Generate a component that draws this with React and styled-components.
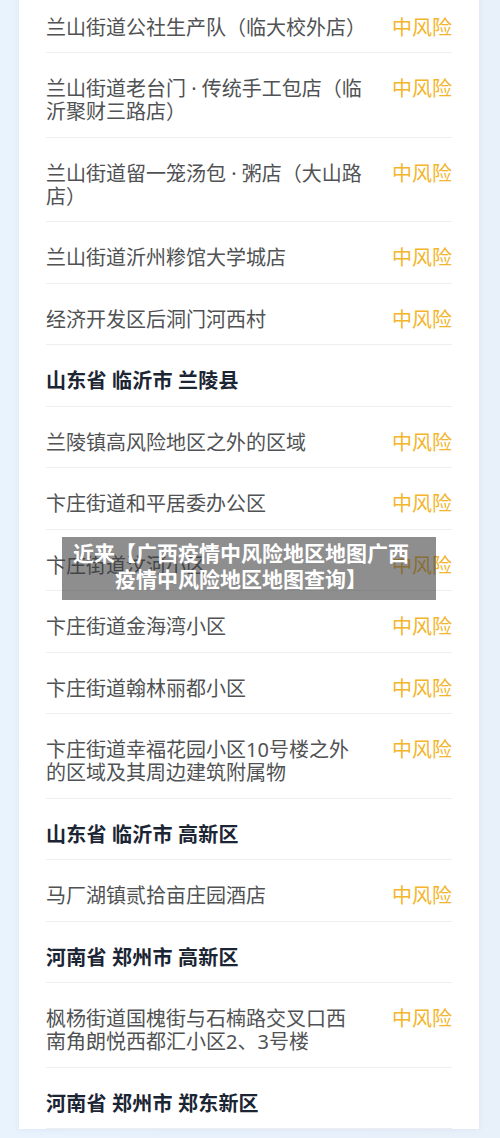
import React from "react";
import styled, { createGlobalStyle } from "styled-components";

const Global = createGlobalStyle`
  html, body {
    margin: 0;
    padding: 0;
    background: #e8f1fb;
  }
  body {
    font-family: "Noto Sans", "Noto Sans CJK SC", sans-serif;
    overflow: hidden;
  }
`;

const Page = styled.div`
  position: relative;
  width: 500px;
  height: 1138px;
  overflow: hidden;
  background: linear-gradient(90deg, #e9f3fd 0%, #e8f0fa 100%);
`;

const Card = styled.div`
  margin: -8.5px 21px 0 19px;
  background: #ffffff;
  padding: 0 27px;
  box-shadow: 0 0 6px rgba(120, 150, 190, 0.12);
`;

const Row = styled.div`
  display: flex;
  align-items: flex-start;
  justify-content: space-between;
  padding: 24px 0 13.5px;
  border-bottom: 1px solid #eceef1;
  font-size: 20px;
  line-height: 23px;
`;

const Name = styled.div`
  color: ${(p) => (p.$header ? "#1b2533" : "#505254")};
  font-weight: ${(p) => (p.$header ? 700 : 400)};
  letter-spacing: ${(p) => (p.$header ? "0.2px" : "0")};
  width: 330px;
`;

const Line = styled.span`
  display: block;
  white-space: nowrap;
`;

const Risk = styled.div`
  color: #f2b52b;
  white-space: nowrap;
`;

const Overlay = styled.div`
  position: absolute;
  top: 537px;
  left: 62px;
  width: 374px;
  height: 63px;
  box-sizing: border-box;
  padding: 3px 16px 0 0;
  background: rgba(60, 60, 60, 0.58);
  color: #ffffff;
  font-weight: 700;
  font-size: 21px;
  line-height: 26px;
  text-align: center;
`;

const rows = [
  { lines: ["兰山街道公社生产队（临大校外店）"], risk: true },
  { lines: ["兰山街道老台门 · 传统手工包店（临", "沂聚财三路店）"], risk: true },
  { lines: ["兰山街道留一笼汤包 · 粥店（大山路", "店）"], risk: true },
  { lines: ["兰山街道沂州糁馆大学城店"], risk: true },
  { lines: ["经济开发区后洞门河西村"], risk: true },
  { lines: ["山东省 临沂市 兰陵县"], header: true },
  { lines: ["兰陵镇高风险地区之外的区域"], risk: true },
  { lines: ["卞庄街道和平居委办公区"], risk: true },
  { lines: ["卞庄街道汶河小区"], risk: true },
  { lines: ["卞庄街道金海湾小区"], risk: true },
  { lines: ["卞庄街道翰林丽都小区"], risk: true },
  { lines: ["卞庄街道幸福花园小区10号楼之外", "的区域及其周边建筑附属物"], risk: true },
  { lines: ["山东省 临沂市 高新区"], header: true },
  { lines: ["马厂湖镇贰拾亩庄园酒店"], risk: true },
  { lines: ["河南省 郑州市 高新区"], header: true },
  { lines: ["枫杨街道国槐街与石楠路交叉口西", "南角朗悦西都汇小区2、3号楼"], risk: true },
  { lines: ["河南省 郑州市 郑东新区"], header: true },
];

export default function App() {
  return (
    <Page>
      <Global />
      <Card>
        {rows.map((r, i) => (
          <Row key={i}>
            <Name $header={r.header}>
              {r.lines.map((l, j) => (
                <Line key={j}>{l}</Line>
              ))}
            </Name>
            {r.risk && <Risk>中风险</Risk>}
          </Row>
        ))}
      </Card>
      <Overlay>
        近来【广西疫情中风险地区地图广西
        <br />
        疫情中风险地区地图查询】
      </Overlay>
    </Page>
  );
}
